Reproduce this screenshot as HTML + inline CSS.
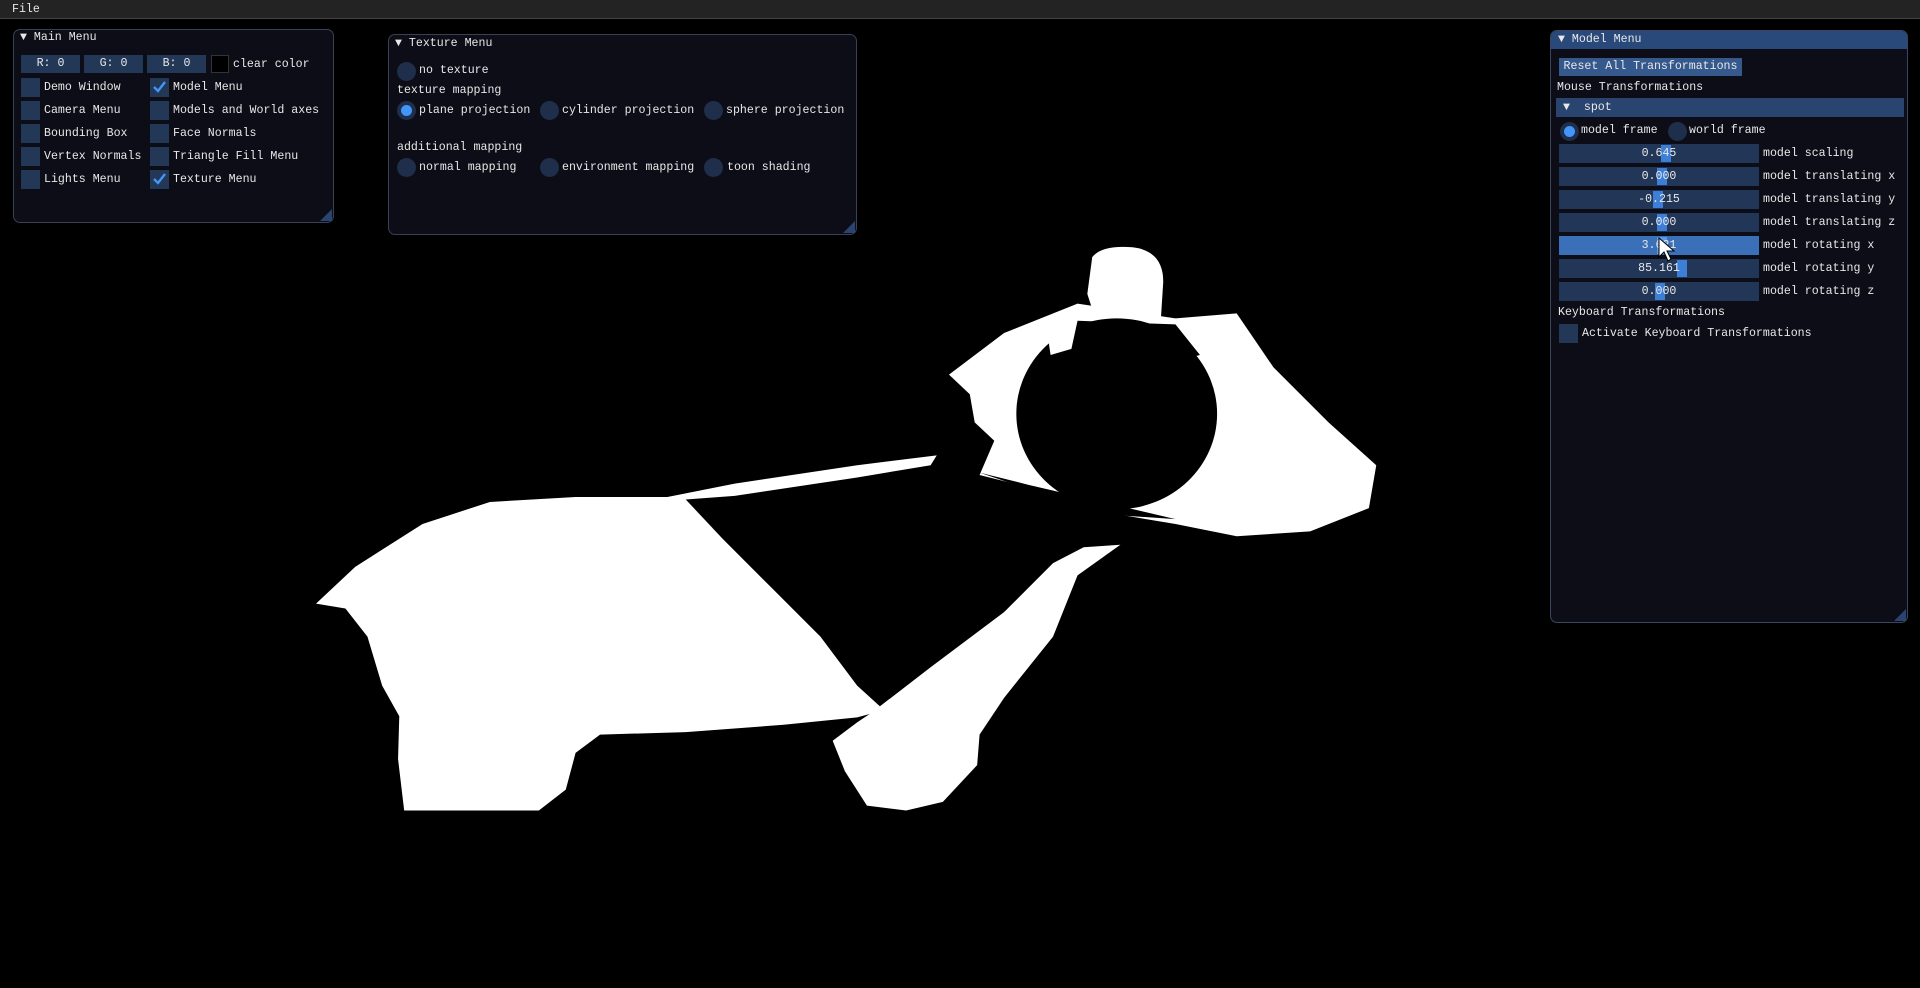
<!DOCTYPE html>
<html><head><meta charset="utf-8"><style>
*{margin:0;padding:0;box-sizing:border-box}
body{width:1920px;height:988px;background:#000;overflow:hidden;position:relative;font-family:"Liberation Mono",monospace;font-size:11.6px;color:#e8e8e8}
.a{position:absolute;white-space:pre;line-height:14px}
.win{position:absolute;background:#0c0d16;border:1px solid #3a3f55;border-radius:7px}
.cb{position:absolute;width:19px;height:19px;background:#233757}
.btn{position:absolute;height:18px;background:#233757;text-align:center;line-height:18px}
.rd{position:absolute;width:19px;height:19px;border-radius:50%;background:#1f2e4a}
.rd.on::after{content:"";position:absolute;left:4px;top:4px;width:11px;height:11px;border-radius:50%;background:#4296fa}
.sl{position:absolute;left:8px;width:200px;height:19px;background:#223657;text-align:center;line-height:19px}
.gr{position:absolute;top:1px;width:10px;height:17px;background:#3d7fd6}
.grip{position:absolute;right:1px;bottom:1px;width:0;height:0;border-left:12px solid transparent;border-bottom:12px solid #2a4470}
.ck{position:absolute;left:3px;top:2px;width:13px;height:13px}
</style></head><body>
<div style="position:absolute;left:0;top:0;width:1920px;height:19px;background:#232323;border-bottom:1px solid #444"></div>
<div class="a" style="left:12px;top:3px">File</div>

<svg style="position:absolute;left:0;top:0" width="1920" height="988" viewBox="0 0 1568 807">
<g fill="#fff">
<path d="M258,493 L290,463 L345,428 L400,410 L470,406 L545,406 L600,395 L700,380 L765,372 L760,380 L700,390 L600,405 L560,408 L590,440 L630,480 L670,520 L700,560 L722,580 L700,586 L640,592 L560,598 L490,600 L470,615 L462,645 L440,662 L330,662 L325,620 L326,585 L312,560 L300,520 L282,497 Z"/>
<path d="M712,582 L760,545 L820,500 L860,460 L885,447 L915,445 L880,470 L860,520 L820,570 L800,600 L798,625 L770,655 L740,662 L708,658 L690,630 L680,605 L700,590 Z"/>
<path d="M775,306 L820,272 L880,248 L960,260 L1010,256 L1040,300 L1085,345 L1124,380 L1118,415 L1070,434 L1010,438 L960,428 L900,418 L840,398 L800,388 L812,360 L796,345 L792,322 Z"/>
<path d="M892,210 Q900,200 925,202 Q950,205 950,230 L948,262 L895,262 L888,240 Z"/>
</g>
<g fill="#000">
<ellipse cx="912" cy="338" rx="82" ry="78"/>
<path d="M880,262 L960,265 L980,290 L940,300 L870,290 Z"/>
<path d="M800,386 L840,396 L960,424 L900,420 Z"/>
</g>
<g fill="#fff"><path d="M855,270 L880,262 L875,285 L858,290 Z"/></g>
</svg>

<!-- Main Menu -->
<div class="win" style="left:13px;top:29px;width:321px;height:194px"><div class="grip"></div></div>
<div class="a" style="left:20px;top:31px">▼ Main Menu</div>
<div class="btn" style="left:21px;top:55px;width:59px">R:  0</div>
<div class="btn" style="left:84px;top:55px;width:59px">G:  0</div>
<div class="btn" style="left:147px;top:55px;width:59px">B:  0</div>
<div style="position:absolute;left:211px;top:55px;width:18px;height:18px;background:#000;border:1px solid #333"></div>
<div class="a" style="left:233px;top:58px">clear color</div>
<div class="cb" style="left:21px;top:78px"></div><div class="a" style="left:44px;top:81px">Demo Window</div>
<div class="cb" style="left:150px;top:78px"><svg class="ck" viewBox="0 0 13 13"><path d="M1,7 L5,11 L12,2" stroke="#4296fa" stroke-width="2.4" fill="none"/></svg></div><div class="a" style="left:173px;top:81px">Model Menu</div>
<div class="cb" style="left:21px;top:101px"></div><div class="a" style="left:44px;top:104px">Camera Menu</div>
<div class="cb" style="left:150px;top:101px"></div><div class="a" style="left:173px;top:104px">Models and World axes</div>
<div class="cb" style="left:21px;top:124px"></div><div class="a" style="left:44px;top:127px">Bounding Box</div>
<div class="cb" style="left:150px;top:124px"></div><div class="a" style="left:173px;top:127px">Face Normals</div>
<div class="cb" style="left:21px;top:147px"></div><div class="a" style="left:44px;top:150px">Vertex Normals</div>
<div class="cb" style="left:150px;top:147px"></div><div class="a" style="left:173px;top:150px">Triangle Fill Menu</div>
<div class="cb" style="left:21px;top:170px"></div><div class="a" style="left:44px;top:173px">Lights Menu</div>
<div class="cb" style="left:150px;top:170px"><svg class="ck" viewBox="0 0 13 13"><path d="M1,7 L5,11 L12,2" stroke="#4296fa" stroke-width="2.4" fill="none"/></svg></div><div class="a" style="left:173px;top:173px">Texture Menu</div>

<!-- Texture Menu -->
<div class="win" style="left:388px;top:34px;width:469px;height:201px"><div class="grip"></div></div>
<div class="a" style="left:395px;top:37px">▼ Texture Menu</div>
<div class="rd" style="left:397px;top:62px"></div><div class="a" style="left:419px;top:64px">no texture</div>
<div class="a" style="left:397px;top:84px">texture mapping</div>
<div class="rd on" style="left:397px;top:101px"></div><div class="a" style="left:419px;top:104px">plane projection</div>
<div class="rd" style="left:540px;top:101px"></div><div class="a" style="left:562px;top:104px">cylinder projection</div>
<div class="rd" style="left:704px;top:101px"></div><div class="a" style="left:726px;top:104px">sphere projection</div>
<div class="a" style="left:397px;top:141px">additional mapping</div>
<div class="rd" style="left:397px;top:158px"></div><div class="a" style="left:419px;top:161px">normal mapping</div>
<div class="rd" style="left:540px;top:158px"></div><div class="a" style="left:562px;top:161px">environment mapping</div>
<div class="rd" style="left:704px;top:158px"></div><div class="a" style="left:727px;top:161px">toon shading</div>

<!-- Model Menu -->
<div class="win" style="left:1550px;top:30px;width:358px;height:593px;border-color:#3a4560">
<div style="position:absolute;left:0;top:0;right:0;height:18px;background:#29497a;border-radius:6px 6px 0 0"></div>
<div class="grip"></div>
<div class="a" style="left:7px;top:2px">▼ Model Menu</div>
<div class="btn" style="left:8px;top:27px;width:183px;background:#35598c">Reset All Transformations</div>
<div class="a" style="left:6px;top:50px">Mouse Transformations</div>
<div style="position:absolute;left:5px;top:67px;width:348px;height:19px;background:#2a4470"></div>
<div class="a" style="left:12px;top:70px">▼  spot</div>
<div class="rd on" style="left:9px;top:91px"></div><div class="a" style="left:30px;top:93px">model frame</div>
<div class="rd" style="left:117px;top:91px"></div><div class="a" style="left:138px;top:93px">world frame</div>
<div class="sl" style="top:113px"><div class="gr" style="left:102px"></div><span style="position:relative">0.645</span></div><div class="a" style="left:212px;top:116px">model scaling</div>
<div class="sl" style="top:136px"><div class="gr" style="left:98px"></div><span style="position:relative">0.000</span></div><div class="a" style="left:212px;top:139px">model translating x</div>
<div class="sl" style="top:159px"><div class="gr" style="left:94px"></div><span style="position:relative">-0.215</span></div><div class="a" style="left:212px;top:162px">model translating y</div>
<div class="sl" style="top:182px"><div class="gr" style="left:98px"></div><span style="position:relative">0.000</span></div><div class="a" style="left:212px;top:185px">model translating z</div>
<div class="sl" style="top:205px;background:#3a70b8"><div class="gr" style="left:98px;background:#5a9ae8"></div><span style="position:relative">3.621</span></div><div class="a" style="left:212px;top:208px">model rotating x</div>
<div class="sl" style="top:228px"><div class="gr" style="left:118px"></div><span style="position:relative">85.161</span></div><div class="a" style="left:212px;top:231px">model rotating y</div>
<div class="sl" style="top:251px"><div class="gr" style="left:96px"></div><span style="position:relative">0.000</span></div><div class="a" style="left:212px;top:254px">model rotating z</div>
<div class="a" style="left:7px;top:275px">Keyboard Transformations</div>
<div class="cb" style="left:8px;top:293px"></div><div class="a" style="left:31px;top:296px">Activate Keyboard Transformations</div>
</div>
<svg style="position:absolute;left:1658px;top:237px" width="18" height="26" viewBox="0 0 18 26"><path d="M1,1 L1,20 L6,15 L10,24 L13,22 L9,14 L16,14 Z" fill="#fff" stroke="#000" stroke-width="1"/></svg>
</body></html>
